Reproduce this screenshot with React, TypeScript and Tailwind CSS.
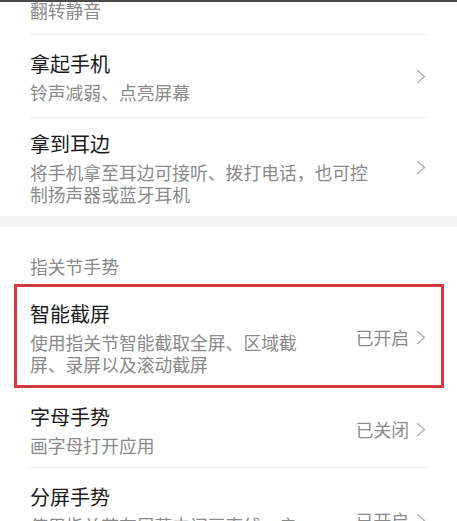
import React from 'react';

type Row = {
  title: string;
  lines: string[];
  value?: string;
};

function Chevron() {
  return (
    <svg
      width="10"
      height="15"
      viewBox="0 0 10 15"
      fill="none"
      stroke="#b4b4b4"
      strokeWidth="1.6"
      strokeLinecap="round"
      strokeLinejoin="round"
      aria-hidden
    >
      <path d="M1.5 1.5 L8.5 7.5 L1.5 13.5" />
    </svg>
  );
}

function Divider() {
  return <div className="ml-[30px] mr-[29px] h-px bg-[#ececec]" />;
}

function RowBody({ row }: { row: Row }) {
  return (
    <>
      <div className="flex min-w-0 flex-1 flex-col">
        <div className="whitespace-nowrap text-[20px] leading-[28px] text-[#1b1b1b]">
          {row.title}
        </div>
        <div className="mt-[3px] flex flex-col">
          {row.lines.map((l) => (
            <div
              key={l}
              className="whitespace-nowrap text-[17.8px] leading-[22px] text-[#8a8a8a]"
            >
              {l}
            </div>
          ))}
        </div>
      </div>
      <div className="flex shrink-0 items-center gap-[7px]">
        {row.value && (
          <span className="text-[17.8px] leading-[22px] text-[#8a8a8a]">{row.value}</span>
        )}
        <Chevron />
      </div>
    </>
  );
}

export default function App() {
  return (
    <div className="relative h-[521px] w-full overflow-hidden bg-white font-['Noto_Sans_CJK_SC','Noto_Sans',sans-serif]">
      {/* toolbar edge */}
      <div className="absolute inset-x-0 top-0 h-[2px] bg-[#4a4a4a]" />

      <div className="flex h-[34px] flex-col justify-end pb-[13px] pl-[30px]">
        <div className="text-[17.8px] leading-[22px] text-[#8a8a8a]">翻转静音</div>
      </div>
      <Divider />

      <div className="flex h-[82px] items-center pl-[30px] pr-[31px] pt-[1px]">
        <RowBody row={{ title: '拿起手机', lines: ['铃声减弱、点亮屏幕'] }} />
      </div>
      <Divider />

      <div className="flex h-[98px] items-center pl-[30px] pr-[31px]">
        <RowBody
          row={{
            title: '拿到耳边',
            lines: ['将手机拿至耳边可接听、拨打电话，也可控', '制扬声器或蓝牙耳机'],
          }}
        />
      </div>

      <div className="h-[11px] bg-[#f3f3f3]" />

      <div className="pb-[7px] pl-[30px] pt-[28px] text-[17.8px] leading-[22px] text-[#8a8a8a]">
        指关节手势
      </div>

      <div className="ml-[14px] mr-[13px] border-[3px] border-[#d33a41]">
        <div className="flex h-[98px] items-center pl-[13px] pr-[15px] pt-[2px]">
          <RowBody
            row={{
              title: '智能截屏',
              lines: ['使用指关节智能截取全屏、区域截', '屏、录屏以及滚动截屏'],
              value: '已开启',
            }}
          />
        </div>
      </div>

      <div className="flex h-[79px] items-center pl-[30px] pr-[31px] pt-[3px]">
        <RowBody row={{ title: '字母手势', lines: ['画字母打开应用'], value: '已关闭' }} />
      </div>
      <Divider />

      <div className="flex h-[100px] items-center pl-[30px] pr-[31px] pt-[4px]">
        <RowBody
          row={{
            title: '分屏手势',
            lines: ['使用指关节在屏幕中间画直线，启', '用分屏'],
            value: '已开启',
          }}
        />
      </div>
    </div>
  );
}
